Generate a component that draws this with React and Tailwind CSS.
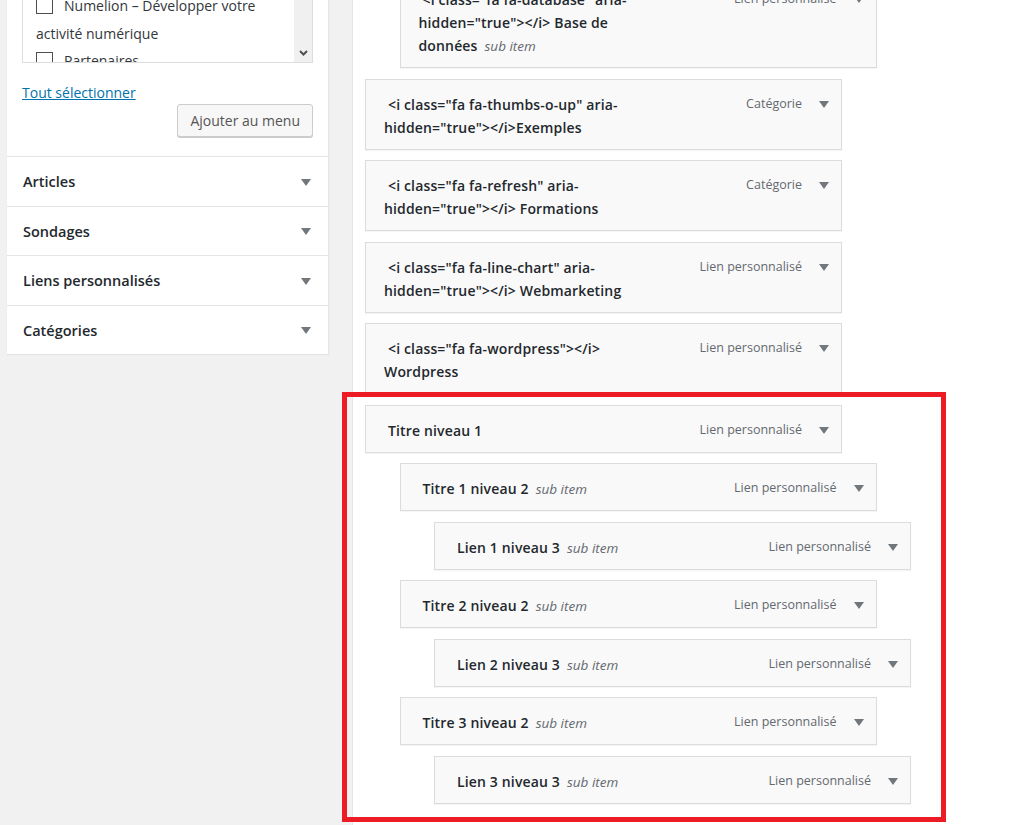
import React from "react";

const Arrow = () => (
  <svg width="10" height="7" viewBox="0 0 10 7" className="shrink-0">
    <path d="M0 0 L10 0 L5 7 Z" fill="#72777c" />
  </svg>
);

const items = [
  {
    level: 1,
    lines: ['<i class="fa fa-database" aria-', 'hidden="true"></i> Base de', "données"],
    sub: true,
    type: "Lien personnalisé",
  },
  { level: 0, lines: ['<i class="fa fa-thumbs-o-up" aria-', 'hidden="true"></i>Exemples'], type: "Catégorie" },
  { level: 0, lines: ['<i class="fa fa-refresh" aria-', 'hidden="true"></i> Formations'], type: "Catégorie" },
  { level: 0, lines: ['<i class="fa fa-line-chart" aria-', 'hidden="true"></i> Webmarketing'], type: "Lien personnalisé" },
  { level: 0, lines: ['<i class="fa fa-wordpress"></i>', "Wordpress"], type: "Lien personnalisé" },
  { level: 0, lines: ["Titre niveau 1"], type: "Lien personnalisé" },
  { level: 1, lines: ["Titre 1 niveau 2"], sub: true, type: "Lien personnalisé" },
  { level: 2, lines: ["Lien 1 niveau 3"], sub: true, type: "Lien personnalisé" },
  { level: 1, lines: ["Titre 2 niveau 2"], sub: true, type: "Lien personnalisé" },
  { level: 2, lines: ["Lien 2 niveau 3"], sub: true, type: "Lien personnalisé" },
  { level: 1, lines: ["Titre 3 niveau 2"], sub: true, type: "Lien personnalisé" },
  { level: 2, lines: ["Lien 3 niveau 3"], sub: true, type: "Lien personnalisé" },
];

const indents = ["ml-0", "ml-[34.5px]", "ml-[69px]"];

function MenuItem({ level, lines, sub, type }) {
  return (
    <div
      className={`${indents[level]} w-[477px] mb-[10.5px] border border-[#dcdcdc] bg-[#f9f9f9] pl-[18px] pr-[12px] pt-[13px] pb-[10px] flex items-start justify-between shadow-[0_1px_1px_rgba(0,0,0,0.04)]`}
    >
      <div className="indent-[4px] text-[14px] leading-[23px] font-semibold tracking-[0.15px] text-[#23282d] whitespace-nowrap">
        {lines.map((l, i) => (
          <React.Fragment key={i}>
            {i > 0 && <br />}
            {l}
            {i === lines.length - 1 && sub && (
              <span className="ml-[7px] italic font-normal leading-none tracking-normal text-[13.5px] text-[#646970]">sub item</span>
            )}
          </React.Fragment>
        ))}
      </div>
      <div className="flex items-center h-[23px]">
        <span className="text-[12.5px] text-[#646970]">{type}</span>
        <span className="ml-[17px]">
          <Arrow />
        </span>
      </div>
    </div>
  );
}

const sections = ["Articles", "Sondages", "Liens personnalisés", "Catégories"];

export default function App() {
  return (
    <div className="relative w-[1030px] h-[825px] overflow-hidden bg-[#f1f1f1] flex font-['Open_Sans','Liberation_Sans',sans-serif]">
      {/* Left panel */}
      <div className="ml-[7px] w-[322px] self-start -mt-[20px] bg-white shadow-[0_1px_1px_rgba(0,0,0,0.06)] border-r border-[#e5e5e5]">
        <div className="px-[15px] pb-[19px]">
          <div className="h-[83px] border border-[#dddddd] flex overflow-hidden">
            <div className="flex-1 pl-[13px] pt-[11px] text-[14px] leading-[27.5px] text-[#32373c]">
              <div>
                <span className="inline-block align-middle w-[17px] h-[17px] border border-[#4f4f4f] bg-white mr-[11px] -mt-[3px]" />
                Numelion – Développer votre
                <br />
                activité numérique
              </div>
              <div>
                <span className="inline-block align-middle w-[17px] h-[17px] border border-[#4f4f4f] bg-white mr-[11px] -mt-[3px]" />
                Partenaires
              </div>
            </div>
            <div className="w-[18px] bg-[#f0f0f0] flex flex-col justify-end items-center pb-[6px]">
              <svg width="9" height="6" viewBox="0 0 9 6">
                <path d="M1 1 L4.5 4.5 L8 1" fill="none" stroke="#505050" strokeWidth="2" />
              </svg>
            </div>
          </div>
          <div className="mt-[20px] h-[20px] leading-[20px] text-[14px]">
            <a className="text-[#0073aa] underline">Tout sélectionner</a>
          </div>
          <div className="flex justify-end mt-[1px]">
            <button className="h-[33px] px-[12px] text-[14px] text-[#555] bg-[#f7f7f7] border border-[#cccccc] rounded-[3px] shadow-[0_1px_0_#cccccc]">
              Ajouter au menu
            </button>
          </div>
        </div>
        {sections.map((s) => (
          <div
            key={s}
            className="h-[49.5px] border-t border-[#e5e5e5] flex items-center justify-between pl-[16px] pr-[17px] pt-[2px]"
          >
            <span className="text-[14.5px] font-semibold text-[#23282d]">{s}</span>
            <Arrow />
          </div>
        ))}
      </div>

      {/* Right panel */}
      <div className="ml-[23px] flex-1 bg-white border-l border-[#e5e5e5] pl-[12px]">
        <div className="-mt-[26px]">
          {items.map((it, i) => (
            <MenuItem key={i} {...it} />
          ))}
        </div>
      </div>

      {/* Red annotation */}
      <div className="absolute left-[342px] top-[392px] w-[604px] h-[430px] border-[5px] border-[#ed1c24] pointer-events-none" />
    </div>
  );
}
